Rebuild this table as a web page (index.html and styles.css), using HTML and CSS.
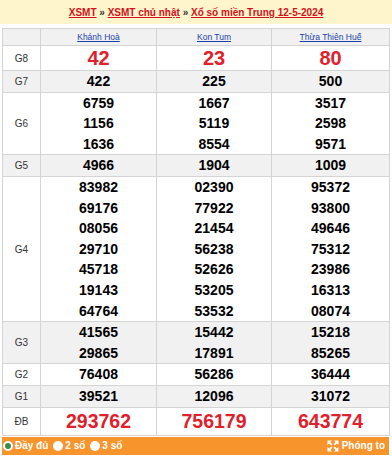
FILE: index.html
```html
<!DOCTYPE html>
<html lang="vi">
<head>
  <meta charset="UTF-8">
  <meta name="viewport" content="width=device-width, initial-scale=1.0">
  <title>XSMT 12-5-2024</title>
  <link rel="stylesheet" href="styles.css">
</head>
<body>
  <div class="title">
    <a href="#">XSMT</a> » <a href="#">XSMT chủ nhật</a> » <a href="#">Xổ số miền Trung 12-5-2024</a>
  </div>

  <div class="wrap">
    <table class="kq">
      <colgroup>
        <col class="c-label">
        <col class="c1">
        <col class="c2">
        <col class="c3">
      </colgroup>
      <tr class="head">
        <th></th>
        <th><a href="#">Khánh Hoà</a></th>
        <th><a href="#">Kon Tum</a></th>
        <th><a href="#">Thừa Thiên Huế</a></th>
      </tr>
      <tr class="g8">
        <td class="label">G8</td>
        <td>42</td>
        <td>23</td>
        <td>80</td>
      </tr>
      <tr class="alt">
        <td class="label">G7</td>
        <td><div>422</div></td>
        <td><div>225</div></td>
        <td><div>500</div></td>
      </tr>
      <tr>
        <td class="label">G6</td>
        <td><div>6759</div><div>1156</div><div>1636</div></td>
        <td><div>1667</div><div>5119</div><div>8554</div></td>
        <td><div>3517</div><div>2598</div><div>9571</div></td>
      </tr>
      <tr class="alt">
        <td class="label">G5</td>
        <td><div>4966</div></td>
        <td><div>1904</div></td>
        <td><div>1009</div></td>
      </tr>
      <tr>
        <td class="label">G4</td>
        <td><div>83982</div><div>69176</div><div>08056</div><div>29710</div><div>45718</div><div>19143</div><div>64764</div></td>
        <td><div>02390</div><div>77922</div><div>21454</div><div>56238</div><div>52626</div><div>53205</div><div>53532</div></td>
        <td><div>95372</div><div>93800</div><div>49646</div><div>75312</div><div>23986</div><div>16313</div><div>08074</div></td>
      </tr>
      <tr class="alt">
        <td class="label">G3</td>
        <td><div>41565</div><div>29865</div></td>
        <td><div>15442</div><div>17891</div></td>
        <td><div>15218</div><div>85265</div></td>
      </tr>
      <tr>
        <td class="label">G2</td>
        <td><div>76408</div></td>
        <td><div>56286</div></td>
        <td><div>36444</div></td>
      </tr>
      <tr class="alt">
        <td class="label">G1</td>
        <td><div>39521</div></td>
        <td><div>12096</div></td>
        <td><div>31072</div></td>
      </tr>
      <tr class="db">
        <td class="label">ĐB</td>
        <td>293762</td>
        <td>756179</td>
        <td>643774</td>
      </tr>
    </table>

    <div class="bar">
      <div class="opts">
        <span class="opt"><i class="radio checked"></i>Đầy đủ</span>
        <span class="opt"><i class="radio"></i>2 số</span>
        <span class="opt"><i class="radio"></i>3 số</span>
      </div>
      <a class="zoom" href="#">
        <svg width="12" height="12" viewBox="0 0 12 12">
          <path d="M0.5 0.5h4.5L0.5 5z M11.5 0.5H7l4.5 4.5z M0.5 11.5h4.5L0.5 7z M11.5 11.5H7l4.5-4.5z" fill="#fff"/>
          <path d="M2 2l2.8 2.8M10 2L7.2 4.8M2 10l2.8-2.8M10 10L7.2 7.2" stroke="#fff" stroke-width="1.8"/>
        </svg>
        Phóng to
      </a>
    </div>
  </div>
</body>
</html>
```

FILE: styles.css
```css
body {
  margin: 0;
  padding: 0;
  background-color: #fff;
  font-family: "Liberation Sans", Arial, sans-serif;
}
.title {
  height: 24px;
  line-height: 25px;
  background-color: #fff5cc;
  text-align: center;
  font-size: 10px;
  font-weight: bold;
  color: #333;
}
.title a {
  color: #d0121b;
  text-decoration: underline;
}
.wrap {
  margin: 4px 3px 0 2px;
}
.kq {
  width: 387px;
  border-collapse: collapse;
  table-layout: fixed;
}
.c-label {
  width: 38px;
}
.c1 {
  width: 116px;
}
.c2 {
  width: 115px;
}
.c3 {
  width: 118px;
}
.kq th, .kq td {
  border: 1px solid #d4d4d4;
  padding: 0;
  text-align: center;
}
.kq td {
  font-size: 14px;
  font-weight: bold;
  color: #000;
}
.kq td div {
  line-height: 20.6px;
}
.kq .head th {
  background-color: #f1f1f1;
  height: 16px;
  font-size: 8.5px;
  font-weight: normal;
}
.kq .head a {
  color: #1a3fa8;
  text-decoration: underline;
}
.kq .alt td {
  background-color: #f1f1f1;
}
.kq .g8 td {
  height: 24px;
  font-size: 20px;
  color: #e0202b;
}
.kq .db td {
  height: 27px;
  font-size: 19.5px;
  color: #e0202b;
}
.kq tr td.label {
  font-size: 10px;
  font-weight: normal;
  color: #333;
}
.bar {
  height: 18px;
  margin-top: 1px;
  background-color: #f7942c;
  display: flex;
  align-items: center;
  justify-content: space-between;
  padding: 0 4px 0 1px;
  color: #fff;
  font-size: 10px;
  font-weight: bold;
}
.opts {
  display: flex;
  align-items: center;
  gap: 5px;
}
.opt {
  display: flex;
  align-items: center;
  gap: 2px;
}
.radio {
  display: inline-block;
  width: 10px;
  height: 10px;
  border-radius: 50%;
  background-color: #fff;
  box-sizing: border-box;
}
.radio.checked {
  background-color: #3c8c4a;
  border: 2px solid #fff;
}
.zoom {
  display: flex;
  align-items: center;
  gap: 3px;
  color: #fff;
  text-decoration: none;
}
```
